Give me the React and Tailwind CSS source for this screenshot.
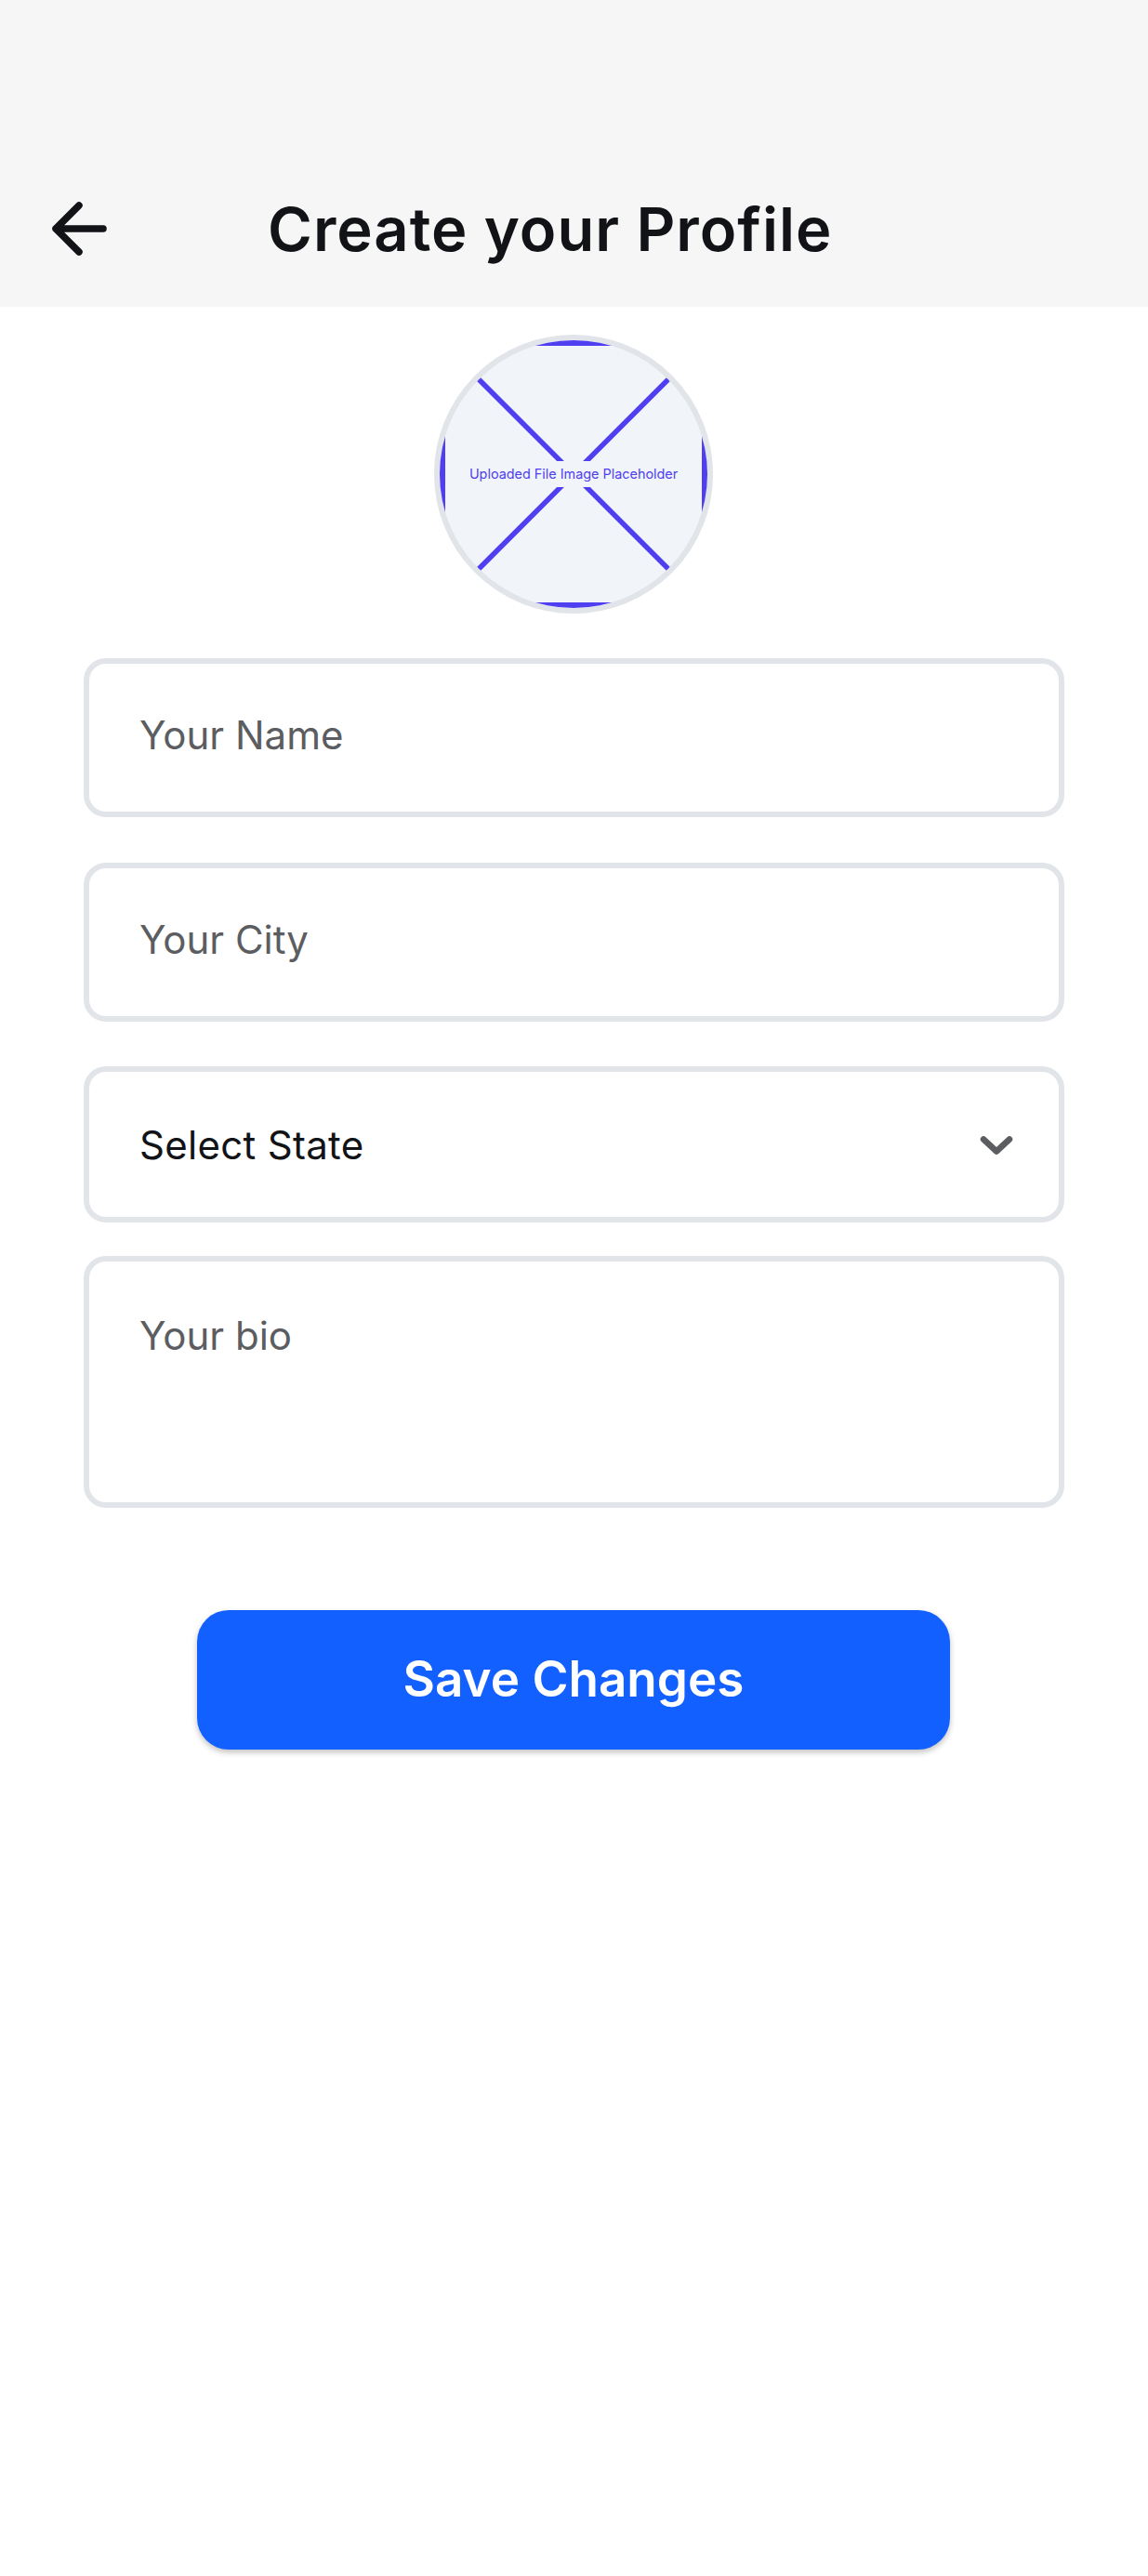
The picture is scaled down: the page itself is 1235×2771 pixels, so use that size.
import React from "react";

const inputClass =
  "block w-full border-[6px] border-[#e1e4e8] rounded-[24px] bg-white pl-[54px] pr-[55px] text-[42px] text-[#121317] placeholder:text-[#5b5d61] placeholder:opacity-100 outline-none font-['Inter',sans-serif]";

function BackArrow() {
  return (
    <svg width="64" height="64" viewBox="0 0 64 64" fill="none" className="shrink-0">
      <path d="M59 32H8M33 7L8 32L33 57" stroke="#121317" strokeWidth="7.5" strokeLinecap="round" strokeLinejoin="round" />
    </svg>
  );
}

function Avatar() {
  return (
    <div className="mt-[30px] ml-[467px] w-[300px] h-[300px] rounded-full border-[6px] border-[#e1e4e8] overflow-hidden relative bg-[#f1f4f9]">
      <svg width="288" height="288" viewBox="0 0 288 288" fill="none" className="block">
        <rect x="3" y="3" width="282" height="282" stroke="#4f3ff0" strokeWidth="6" />
        <path d="M3 3L285 285M285 3L3 285" stroke="#4f3ff0" strokeWidth="5.5" />
      </svg>
      <div className="absolute left-0 right-0 top-[130px] h-[28px] flex justify-center">
        <span className="px-[2px] bg-[#f1f4f9] text-[#4f3ff0] text-[14.4px] leading-[28px] whitespace-nowrap font-['Inter',sans-serif]">
          Uploaded File Image Placeholder
        </span>
      </div>
    </div>
  );
}

export default function App() {
  return (
    <div className="min-h-[2771px] bg-white font-['Inter',sans-serif]">
      <header className="h-[330px] bg-[#f6f6f6] pt-[214px] pl-[52px] flex items-start">
        <BackArrow />
        <h1 className="ml-[172px] mt-[1px] text-[65px] leading-[64px] tracking-[1px] font-semibold text-[#121317] whitespace-nowrap">
          Create your Profile
        </h1>
      </header>

      <Avatar />

      <form className="mt-[48px] px-[90px]">
        <input className={`${inputClass} h-[171px] pb-[6px]`} placeholder="Your Name" />
        <input className={`${inputClass} h-[171px] mt-[49px] pb-[7px]`} placeholder="Your City" />
        <div className="relative mt-[48px]">
          <select className={`${inputClass} h-[168px] appearance-none tracking-[0.3px]`} defaultValue="">
            <option value="">Select State</option>
          </select>
          <svg width="40" height="26" viewBox="0 0 40 26" fill="none" className="absolute right-[53px] top-[71px] pointer-events-none">
            <path d="M6 7.5L20 20.5L34 7.5" stroke="#5b5d61" strokeWidth="6.5" strokeLinecap="round" strokeLinejoin="round" />
          </svg>
        </div>
        <textarea
          className={`${inputClass} mt-[36px] h-[271px] pt-[48px] resize-none`}
          placeholder="Your bio"
        />
        <button
          type="button"
          className="block mt-[110px] ml-[122px] w-[810px] h-[150px] rounded-[34px] bg-[#1260ff] text-white text-[53px] font-semibold shadow-[0_3px_6px_rgba(0,0,0,0.25)]"
        >
          Save Changes
        </button>
      </form>
    </div>
  );
}
